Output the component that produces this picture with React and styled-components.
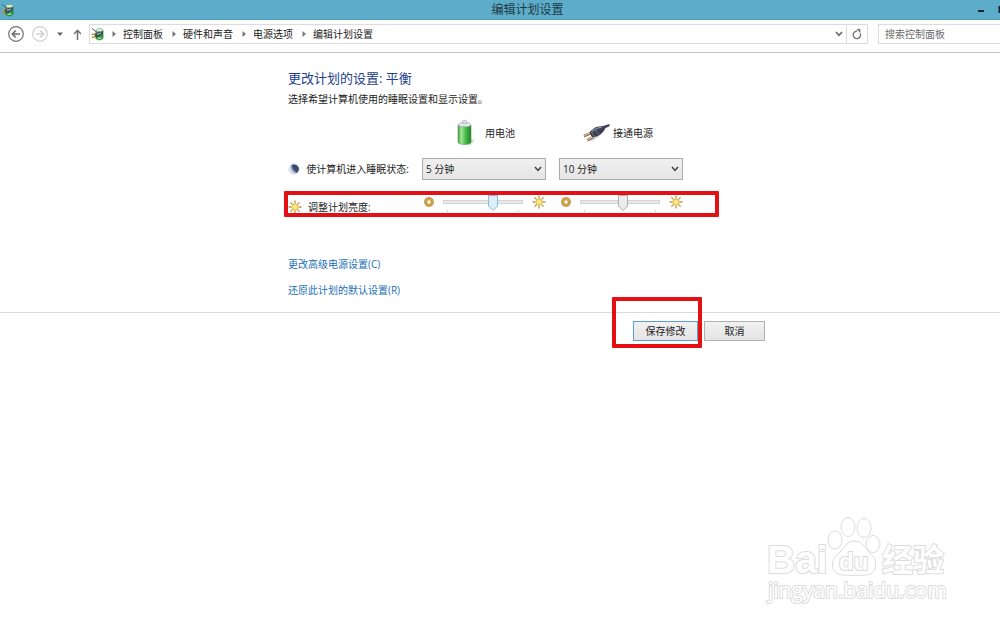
import React from "react";
import styled, { createGlobalStyle, css } from "styled-components";

const GlobalStyle = createGlobalStyle`
  * { box-sizing: border-box; }
  body {
    margin: 0;
    background: #fff;
    color: #1c1c1c;
    font: 10px/14px "Open Sans", "Noto Sans CJK SC", sans-serif;
  }
  button, input, select { font: inherit; color: inherit; }
`;

const Window = styled.div`
  position: relative;
  min-height: 100vh;
  overflow: hidden;
`;

const TitleBar = styled.header`
  display: flex;
  align-items: center;
  height: 20px;
  padding-left: 1px;
  background: #5dacc9;
  border-bottom: 1px solid #4f9dba;
`;

const Title = styled.h1`
  flex: 1;
  margin: 0;
  padding-left: 64px;
  font-size: 12px;
  font-weight: 400;
  line-height: 18px;
  text-align: center;
  color: #1e3a47;
`;

const WindowButton = styled.button`
  display: flex;
  align-items: center;
  justify-content: flex-end;
  width: 24px;
  height: 18px;
  padding: 0;
  border: 0;
  background: none;
`;

const NavBar = styled.nav`
  display: flex;
  align-items: center;
  height: 33px;
  padding: 0 0 4px 8px;
  border-bottom: 1px solid #c3c3c3;
`;

const NavButton = styled.button`
  display: flex;
  align-items: center;
  justify-content: center;
  width: ${(p) => p.$width}px;
  height: 18px;
  padding: 0;
  border: 0;
  background: none;
`;

const AddressBox = styled.div`
  display: flex;
  flex: 1;
  align-items: center;
  height: 20px;
  padding-left: 1px;
  border: 1px solid #dcdcdc;
`;

const Crumbs = styled.ol`
  display: flex;
  flex: 1;
  gap: 2px;
  margin: 0;
  padding: 0;
  list-style: none;
`;

const Crumb = styled.li`
  display: flex;
  align-items: center;
  gap: 7px;
  padding-left: 7px;
  a { color: #1c1c1c; text-decoration: none; }
`;

const RefreshCell = styled.div`
  display: flex;
  align-items: center;
  height: 18px;
  border-left: 1px solid #dcdcdc;
`;

const SearchInput = styled.input`
  width: 122px;
  height: 20px;
  margin-left: 10px;
  padding: 0 6px;
  border: 1px solid #dcdcdc;
  border-right: 0;
  border-radius: 0;
  outline: 0;
  background: #fff;
  &::placeholder { color: #6b6b6b; opacity: 1; }
`;

const Column = styled.div`
  width: 477px;
  margin-left: 288px;
`;

const Main = styled.main`
  padding: 15px 0 15px;
  border-bottom: 1px solid #d9d9d9;
`;

const Heading = styled.h2`
  margin: 0 0 4px;
  font-size: 13px;
  font-weight: 400;
  line-height: 20px;
  color: #1d3f8c;
`;

const Description = styled.p`
  margin: 0 0 14px;
`;

const SettingRow = styled.div`
  position: relative;
  display: grid;
  grid-template-columns: 121px 124px 124px;
  column-gap: 13px;
  align-items: center;
  height: ${(p) => p.$height}px;
  margin-bottom: ${(p) => p.$after}px;
`;

const Source = styled.div`
  display: flex;
  align-items: center;
  gap: ${(p) => p.$gap}px;
  padding-left: ${(p) => p.$indent}px;
`;

const SettingLabel = styled.div`
  display: flex;
  align-items: center;
  gap: 6px;
  white-space: nowrap;
  padding-top: ${(p) => (p.$low ? 8 : 0)}px;
`;

const chevron = `url("data:image/svg+xml,%3Csvg xmlns='http://www.w3.org/2000/svg' width='8' height='6'%3E%3Cpath d='M1 1l3 3.4L7 1' fill='none' stroke='%23404040' stroke-width='1.5'/%3E%3C/svg%3E")`;

const Select = styled.select`
  width: 124px;
  height: 22px;
  padding: 0 16px 0 3px;
  border: 1px solid #acacac;
  border-radius: 0;
  appearance: none;
  background: ${chevron} right 3px center no-repeat, linear-gradient(#f0f0f0, #e5e5e5);
`;

const BrightnessCell = styled.div`
  display: flex;
  align-items: center;
  justify-content: space-between;
  padding: 0 0 2px 2px;
`;

const SliderBox = styled.div`
  position: relative;
  width: 80px;
  height: 16px;
  &::after {
    content: "";
    position: absolute;
    left: 4px;
    right: 4px;
    bottom: -2px;
    height: 2px;
    border: solid #d2d2d2;
    border-width: 0 1px;
  }
`;

const thumb = (stroke, fill) =>
  `url("data:image/svg+xml,%3Csvg xmlns='http://www.w3.org/2000/svg' width='10' height='16'%3E%3Cpath d='M.5 .5h9v10.5l-4.5 4.5L.5 11z' fill='%23${fill}' stroke='%23${stroke}'/%3E%3C/svg%3E")`;

const Range = styled.input`
  display: block;
  width: 80px;
  height: 16px;
  margin: 0;
  appearance: none;
  background: none;
  &::-webkit-slider-runnable-track {
    height: 4px;
    border: 1px solid #d3d3d3;
    background: #e7eaea;
  }
  &::-webkit-slider-thumb {
    width: 10px;
    height: 16px;
    margin-top: -6px;
    border: 0;
    appearance: none;
    background: ${(p) => (p.$active ? thumb("83bcdc", "dceffa") : thumb("adadad", "ececec"))};
  }
`;

const Links = styled.div`
  display: flex;
  flex-direction: column;
  align-items: flex-start;
  gap: 12px;
`;

const Link = styled.a`
  color: #1a6fb8;
  text-decoration: none;
`;

const Footer = styled.footer`
  display: flex;
  justify-content: flex-end;
  gap: 6px;
  padding-top: 8px;
`;

const SaveSpot = styled.div`
  position: relative;
  display: flex;
`;

const PushButton = styled.button`
  width: ${(p) => (p.$primary ? 65 : 61)}px;
  height: 20px;
  padding: 0;
  border: 1px solid ${(p) => (p.$primary ? "#5aa0d8" : "#b0b0b0")};
  background: linear-gradient(#f1f1f1, #e4e4e4);
`;

const Marker = styled.span`
  position: absolute;
  border: 4px solid #e51013;
  border-radius: 1px;
  pointer-events: none;
  ${(p) =>
    p.$around === "row"
      ? css`top: -1px; bottom: -3px; left: -4px; width: 435px;`
      : css`top: -24px; bottom: -7px; left: -21px; right: -4px;`}
`;

const Watermark = styled.svg`
  position: absolute;
  right: 50px;
  bottom: 17px;
  text { paint-order: stroke; }
`;

const PowerIcon = ({ size }) => (
  <svg width={size} height={size} viewBox="0 0 14 14" aria-hidden="true">
    <path d="M5 3.2C5.600 1.600 11 1.300 12 3v8c-.8 2.200-6 2.400-7 .5z" fill="#2f9b45" stroke="#246338" strokeWidth=".7" />
    <ellipse cx="8.500" cy="3" rx="3.300" ry="1.500" fill="#d9eadb" />
    <path d="M6.200 4.500v3M6.500 11.500l4-.5" stroke="#8be08a" strokeWidth="1.400" />
    <path d="M1 1.500l3 2.200 1.500 2" fill="none" stroke="#4b6272" strokeWidth="1" />
    <path d="M3.500 7l4-2 4.500-.5-1 3-4 2.500-3 .3z" fill="#3d4a4d" />
    <path d="M.5 7.500l3.500-.5M1 10.500l3.500-1" stroke="#b3963c" strokeWidth="1.700" />
    <path d="M6 7.500l4-1.500" stroke="#c5d2cf" strokeWidth="1" />
  </svg>
);

const CircleArrow = ({ color, back }) => (
  <svg width="16" height="16" viewBox="0 0 16 16" fill="none" stroke={color} aria-hidden="true">
    <circle cx="8" cy="8" r="7.300" strokeWidth="1.200" />
    <path d={back ? "M12 8H4.500M7.700 4.600L4.300 8l3.400 3.400" : "M4 8h7.500M8.300 4.600L11.700 8l-3.400 3.400"} strokeWidth="1.600" />
  </svg>
);

const CrumbArrow = () => (
  <svg width="4" height="6" viewBox="0 0 4 6" aria-hidden="true">
    <path d="M.5 0L4 3 .5 6z" fill="#777" />
  </svg>
);

const BatteryIcon = () => (
  <svg width="20" height="26" viewBox="0 0 20 26" aria-hidden="true">
    <defs>
      <linearGradient id="cell">
        <stop offset="0" stopColor="#3f9f45" />
        <stop offset=".25" stopColor="#a5e59a" />
        <stop offset=".55" stopColor="#4fc04f" />
        <stop offset="1" stopColor="#1d8226" />
      </linearGradient>
    </defs>
    <path d="M13 18l6 2-4 5-8-.5z" fill="#000" opacity=".13" />
    <path d="M2 5v17.500c1 2.600 12 2.600 13 0V5z" fill="url(#cell)" stroke="#4d9a55" strokeWidth=".6" />
    <path d="M2 5C3 3 5 2.600 6 2.400V1.500c1-1.200 4-1.200 5 0v.9c1 .2 3 .6 4 2.600-1 2.400-12 2.400-13 0z" fill="#e3e9ee" stroke="#95a8a3" strokeWidth=".7" />
    <path d="M6 2.800c1 1 4 1 5 0" fill="none" stroke="#8896a0" strokeWidth=".7" />
  </svg>
);

const PlugIcon = () => (
  <svg width="27" height="20" viewBox="0 0 27 20" aria-hidden="true">
    <path d="M3 18.500l8-1 7-6-6 .5z" fill="#000" opacity=".14" />
    <path d="M1 13l7-3M4.500 17l6-3.200" stroke="#8a6544" strokeWidth="2.600" />
    <path d="M1.500 12.500l6-2.700M5 16.400l5-2.800" stroke="#ecd0aa" strokeWidth="1.200" />
    <path d="M7 8.500l5-4c3-1.500 5-.7 8-1.500L26.500 1v2.200l-4 1.800c-1.500 4-5 7-9.500 8.800L9.500 14C7.500 12.500 6.500 10.500 7 8.500z" fill="#3c4052" />
    <path d="M9 8.500c3.500-3 6-4 10-4.300" fill="none" stroke="#8b91a5" strokeWidth="1.200" />
    <path d="M8.500 8.500c.5 2 1.500 3.700 3 4.500M13 7c.5 2 1.500 3 3 4" fill="none" stroke="#777c90" />
  </svg>
);

const MoonIcon = () => (
  <svg width="14" height="14" viewBox="0 0 14 14" aria-hidden="true">
    <circle cx="7" cy="7" r="6.200" fill="#cdd7e6" stroke="#e4e9f1" />
    <path d="M3.500 3C6 .5 11.500 2 12.300 6c.4 2.500-.8 4.500-2.800 5.700C6.500 11 3.500 8 3.500 3z" fill="#6d7fa6" />
    <path d="M4.500 2.500C8 1 12 3.500 12 7c0 1.800-.8 3-2 4C8.500 9.500 5.500 7 4.500 2.500z" fill="#3a466b" />
  </svg>
);

const SunIcon = () => (
  <svg width="14" height="14" viewBox="0 0 14 14" aria-hidden="true">
    <path d="M7 .5v2.700M7 10.800v2.700M.5 7h2.700M10.800 7h2.700M2.400 2.400l2 2M9.600 9.600l2 2M11.600 2.400l-2 2M4.400 9.600l-2 2" stroke="#b9974a" strokeWidth="1.300" />
    <circle cx="7" cy="7" r="3.200" fill="#ffe987" stroke="#d9ac3c" strokeWidth="1" />
  </svg>
);

const DimIcon = () => (
  <svg width="10" height="10" viewBox="0 0 10 10" aria-hidden="true">
    <circle cx="5" cy="5" r="3.400" fill="#fff3d0" stroke="#a87b25" strokeWidth="2.800" />
    <circle cx="5" cy="5" r="3.300" fill="none" stroke="#d9ae55" strokeWidth="1.400" />
  </svg>
);

const Brightness = ({ label, value, active }) => (
  <BrightnessCell>
    <DimIcon />
    <SliderBox>
      <Range type="range" aria-label={label} defaultValue={value} $active={active} />
    </SliderBox>
    <SunIcon />
  </BrightnessCell>
);

const crumbs = ["控制面板", "硬件和声音", "电源选项", "编辑计划设置"];

export default function App() {
  return (
    <Window>
      <GlobalStyle />
      <TitleBar>
        <PowerIcon size={14} />
        <Title>编辑计划设置</Title>
        <WindowButton aria-label="最小化">
          <svg width="24" height="10" viewBox="0 0 24 10" aria-hidden="true">
            <path d="M2 5h6v2H2zM22.500 1H24v7h-1.500z" fill="#14242c" />
          </svg>
        </WindowButton>
      </TitleBar>

      <NavBar>
        <NavButton $width={16} aria-label="后退"><CircleArrow back color="#707070" /></NavButton>
        <NavButton $width={32} aria-label="前进"><CircleArrow color="#cfcfcf" /></NavButton>
        <NavButton $width={8} aria-label="最近的位置">
          <svg width="6" height="4" viewBox="0 0 6 4" aria-hidden="true"><path d="M0 .5h6L3 4z" fill="#666" /></svg>
        </NavButton>
        <NavButton $width={25} aria-label="向上">
          <svg width="9" height="11" viewBox="0 0 9 11" fill="none" stroke="#707070" strokeWidth="1.500" aria-hidden="true">
            <path d="M5.500 11V1.500M2 5l3.500-3.700L9 5" />
          </svg>
        </NavButton>
        <AddressBox>
          <PowerIcon size={14} />
          <Crumbs>
            {crumbs.map((name) => (
              <Crumb key={name}>
                <CrumbArrow />
                <a href="#">{name}</a>
              </Crumb>
            ))}
          </Crumbs>
          <NavButton $width={14} aria-label="历史记录">
            <svg width="8" height="6" viewBox="0 0 8 6" aria-hidden="true">
              <path d="M1 1l3 3.300L7 1" fill="none" stroke="#666" strokeWidth="1.600" />
            </svg>
          </NavButton>
          <RefreshCell>
            <NavButton $width={20} aria-label="刷新">
              <svg width="10" height="11" viewBox="0 0 10 11" aria-hidden="true">
                <path d="M8.300 4.500A3.700 3.700 0 1 1 5 2.200" fill="none" stroke="#777" strokeWidth="1.400" />
                <path d="M4.500 0h3.800v4.300z" fill="#777" />
              </svg>
            </NavButton>
          </RefreshCell>
        </AddressBox>
        <SearchInput type="text" aria-label="搜索控制面板" placeholder="搜索控制面板" />
      </NavBar>

      <Main>
        <Column>
          <Heading>更改计划的设置: 平衡</Heading>
          <Description>选择希望计算机使用的睡眠设置和显示设置。</Description>

          <SettingRow $height={26} $after={12}>
            <span />
            <Source $indent={34} $gap={9}><BatteryIcon />用电池</Source>
            <Source $indent={24} $gap={3}><PlugIcon />接通电源</Source>
          </SettingRow>

          <SettingRow $height={22} $after={12}>
            <SettingLabel><MoonIcon /><label htmlFor="sleep-battery">使计算机进入睡眠状态:</label></SettingLabel>
            <Select id="sleep-battery" defaultValue="5"><option value="5">5 分钟</option></Select>
            <Select aria-label="接通电源时进入睡眠状态" defaultValue="10"><option value="10">10 分钟</option></Select>
          </SettingRow>

          <SettingRow $height={22} $after={43}>
            <SettingLabel $low><SunIcon />调整计划亮度:</SettingLabel>
            <Brightness label="用电池时的亮度" value={64} active />
            <Brightness label="接通电源时的亮度" value={54} />
            <Marker $around="row" />
          </SettingRow>

          <Links>
            <Link href="#">更改高级电源设置(C)</Link>
            <Link href="#">还原此计划的默认设置(R)</Link>
          </Links>
        </Column>
      </Main>

      <Column>
        <Footer>
          <SaveSpot>
            <PushButton $primary>保存修改</PushButton>
            <Marker $around="button" />
          </SaveSpot>
          <PushButton>取消</PushButton>
        </Footer>
      </Column>

      <Watermark width="184" height="92" viewBox="0 0 184 92" fill="#fff" stroke="#dcdcdc" strokeWidth="1">
        <g fontFamily="'Liberation Sans', 'Noto Sans CJK SC', sans-serif" fontWeight="700" strokeWidth="2">
          <text x="1" y="57" fontSize="39">Bai</text>
          <g strokeWidth="1">
            <ellipse cx="69" cy="24" rx="7" ry="9" />
            <ellipse cx="82" cy="11" rx="7" ry="9.500" />
            <ellipse cx="98" cy="12" rx="7" ry="9.500" />
            <ellipse cx="107" cy="28" rx="7" ry="8.500" />
            <path d="M88 25c9 0 11 8 17 13 7 6 7 20-5 21-7 .6-17 .6-24 0-12-1-12-15-4-21 6-5 8-13 16-13z" />
          </g>
          <text x="73" y="54" fontSize="24">du</text>
          <text x="116" y="55" fontSize="31">经验</text>
        </g>
        <text x="2" y="82" fontSize="21" strokeWidth="2" fontFamily="'Open Sans', sans-serif">jingyan.baidu.com</text>
      </Watermark>
    </Window>
  );
}
